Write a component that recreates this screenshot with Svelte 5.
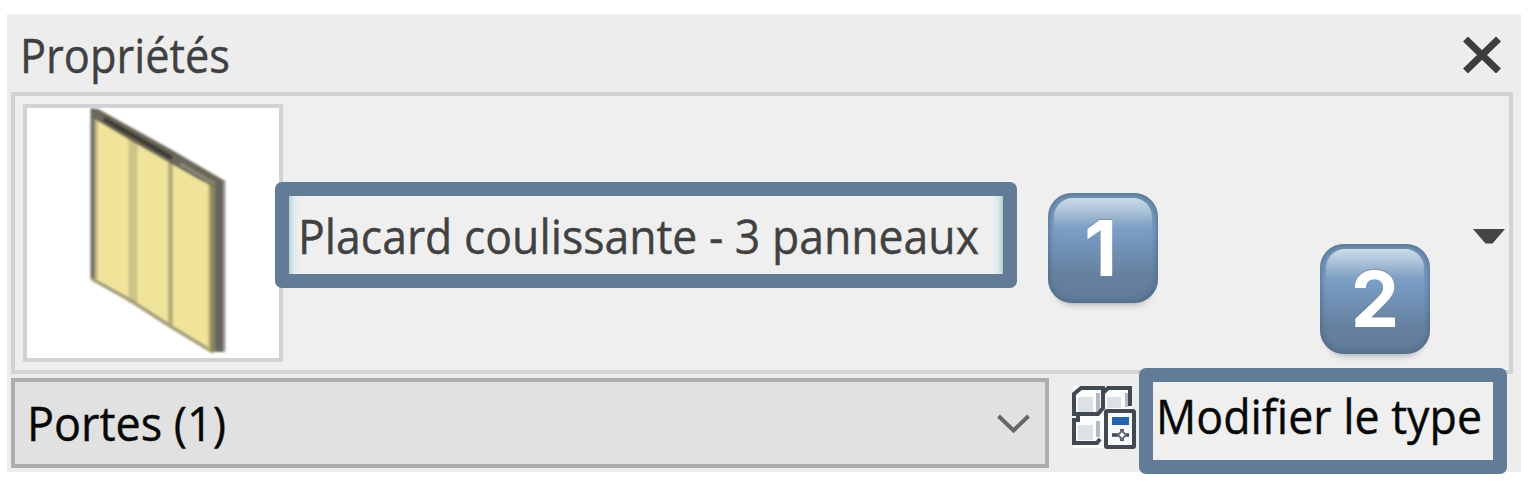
<script>
  const badges = [
    { n: '1', cls: 'one' },
    { n: '2', cls: 'two' }
  ];
</script>

{#snippet label(text, width, color)}
  <svg class="label" {width} height="64" viewBox="0 0 {width} 64">
    <text x="-2" y="49.2" fill={color} stroke={color} textLength={width + 2} lengthAdjust="spacingAndGlyphs">{text}</text>
  </svg>
{/snippet}

<main>
  <section class="panel">
    <header>
      {@render label('Propriétés', 208, '#404040')}
      <svg class="close" width="40" height="36" viewBox="0 0 40 36">
        <path d="M3.5 2 L36.5 34 M36.5 2 L3.5 34" />
      </svg>
    </header>

    <div class="selector">
      <div class="thumb">
        <svg width="252" height="250" viewBox="27 108 252 250">
          <defs><filter id="soft"><feGaussianBlur stdDeviation="0.9" /></filter></defs>
          <g filter="url(#soft)">
            <path d="M91 109 L98 109 L225 181 L225 351 L213 353 L91 279Z" fill="#f0e49b" />
            <path d="M133 134 V303" stroke="#cdc287" stroke-width="9" />
            <path d="M170.5 157 V327" stroke="#b8ae79" stroke-width="5" />
            <path d="M96 114 V279" stroke="#b8ae79" stroke-width="3" />
            <path d="M92.5 109 V279" stroke="#6d6d6a" stroke-width="4" />
            <path d="M92 279 L130 300 L170 326 L213 352" fill="none" stroke="#a39c79" stroke-width="3.5" />
            <path d="M209.5 184 V350" stroke="#c4b878" stroke-width="3" />
            <path d="M212.5 184 V352" stroke="#8b835b" stroke-width="4" />
            <path d="M219 181 V352" stroke="#656562" stroke-width="9" />
            <path d="M224.5 181 V352" stroke="#989898" stroke-width="2" />
            <path d="M91 108 L98 109 L172 150 L225 181 L214 187 L198 179 L133 142 L91 117Z" fill="#6b685a" />
            <path d="M104 119 L172 158" stroke="#3d3a33" stroke-width="4.5" />
            <path d="M180 164 L215 184" stroke="#8c897a" stroke-width="3" />
          </g>
        </svg>
      </div>
      <div class="frame family">{@render label('Placard coulissante - 3 panneaux', 679, '#414141')}</div>
      <svg class="arrow" width="32" height="17" viewBox="0 0 32 17">
        <path d="M0 1 H32 L19.5 15.5 H12.5Z" fill="#444546" />
      </svg>
    </div>

    <div class="bottom">
      <div class="dropdown">
        {@render label('Portes (1)', 197, '#080808')}
        <svg class="chevron" width="36" height="22" viewBox="0 0 36 22">
          <path d="M2.5 2 L17.5 16.5 L32.5 2" />
        </svg>
      </div>
      <svg class="edit" width="64" height="64" viewBox="0 0 64 64">
        <path d="M1 1 H60 V24 H64 V63 H1Z" fill="#fbfcfc" />
        <path d="M6 12 H21 V27 H6ZM35 12 H49 V23 H35ZM6 40 H21 V55 H6Z" fill="#dde0e5" />
        <path d="M26 8 V27 M55 8 V22 M26 36 V52" stroke="#b4bac4" stroke-width="4" />
        <path d="M9 3 H31 V23 L26 29 H2 V9Z M31 8 L36 3 H58 V21 M6 29 V35 H2 V58 H25 L28 54" fill="none" stroke="#414953" stroke-width="4" />
        <rect x="34" y="26" width="28" height="36" rx="1" fill="#f7f8f9" stroke="#414953" stroke-width="4" />
        <rect x="40" y="32" width="17" height="8" fill="#2362ae" />
        <path d="M40 50 H47 M53 50 H57 M50 44 V47 M50 53 V56" stroke="#414953" stroke-width="3.6" />
        <path d="M50 46 L54 50 L50 54 L46 50Z" fill="#fff" stroke="#68717c" stroke-width="2" />
      </svg>
      <div class="frame type">{@render label('Modifier le type', 324, '#080808')}</div>
    </div>
  </section>

  {#each badges as b}
    <div class="badge {b.cls}"><span>{b.n}</span></div>
  {/each}
</main>

<style>
  :global(body) { background: #fff; }
  * { box-sizing: border-box; }
  main {
    position: relative;
    width: 1530px;
    height: 484px;
    padding: 14px 9px 12px 7px;
    overflow: hidden;
    background: #fff;
  }
  svg { display: block; flex: none; }
  .label { overflow: visible; }
  .label text { font: 400 48px 'Open Sans', 'Noto Sans', sans-serif; stroke-width: 0.4px; }
  .panel {
    width: 1514px;
    height: 458px;
    padding: 0 8px 0 4px;
    background: #ededed;
  }
  header {
    display: flex;
    justify-content: space-between;
    align-items: flex-start;
    height: 78px;
    padding: 10px 11px 0 11px;
  }
  .close { margin-top: 13px; }
  .close path { stroke: #3d3d3d; stroke-width: 7; fill: none; }
  .selector {
    display: flex;
    align-items: center;
    height: 282px;
    padding: 0 4px 0 8px;
    border: 4px solid #d0d2d4;
    background: #efefef;
  }
  .thumb {
    flex: none;
    width: 260px;
    height: 258px;
    border: 4px solid #d0d2d4;
    background: #fff;
  }
  .frame {
    flex: none;
    height: 106px;
    border: 14px solid #627b96;
    border-radius: 7px;
    background: #efefef;
  }
  .family {
    width: 742px;
    margin: 4px 0 0 -8px;
    padding: 9px 0 0 11px;
    background: linear-gradient(90deg, #b7d3da 0, #dfecee 5px, #efefef 11px, #efefef 703px, #dce8ea 709px, #b4ced4 714px);
  }
  .arrow { margin: 7px 0 0 auto; }
  .bottom { display: flex; align-items: flex-start; padding-top: 4px; }
  .dropdown {
    flex: none;
    display: flex;
    justify-content: space-between;
    width: 1038px;
    height: 90px;
    padding: 10px 13px 0 14px;
    border: 4px solid #adadad;
    background: #e1e1e1;
  }
  .chevron { margin-top: 22px; }
  .chevron path { stroke: #666; stroke-width: 4; fill: none; }
  .edit { margin: 7px 0 0 23px; }
  .type {
    width: 368px;
    margin: -10px 0 0 3px;
    padding: 3px 0 0 5px;
  }
  .badge {
    position: absolute;
    display: flex;
    justify-content: center;
    width: 110px;
    height: 110px;
    border-radius: 24px;
    background: linear-gradient(#7394b5 0, #7b9ec5 34%, #7192b7 50%, #66819f 75%, #607b98 100%);
    box-shadow: inset 0 0 6px 1px #46627fcc, 0 9px 8px -9px #0006;
    font: 700 77px/110px Inter, sans-serif;
    color: #fff;
  }
  .badge::before {
    content: '';
    position: absolute;
    inset: 5px 6px auto;
    height: 31px;
    border-radius: 19px 19px 0 0;
    background: linear-gradient(#cbdbe8, #a9c0d7 45%, #7fa2c800);
  }
  .badge span { position: relative; text-shadow: 0 -1px 1px #77777788; }
  .one { left: 1048px; top: 193px; padding-right: 5px; }
  .two { left: 1320px; top: 244px; }
</style>
